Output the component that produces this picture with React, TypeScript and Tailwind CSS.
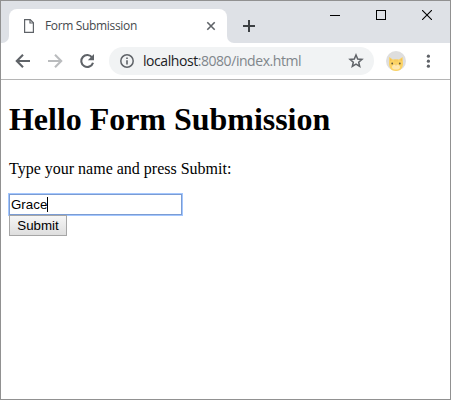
import React from 'react';

const uiFont = "font-['Segoe_UI','Open_Sans',sans-serif]";

function TabStrip() {
  return (
    <div className="flex h-[42px] shrink-0 flex-col bg-white">
      <div className="h-2 shrink-0 bg-[#dee1e6]" />
      <div className="flex h-[34px]">
        <div className="w-2 shrink-0 rounded-br-[7px] bg-[#dee1e6]" />
        <div className="w-[218px] shrink-0 bg-[linear-gradient(#dee1e6_50%,#fff_50%)]">
          <div className="flex h-[34px] items-center rounded-t-lg bg-white pr-[11px] pl-[14px]">
            <svg width="12" height="16" viewBox="0 0 12 16" fill="none" stroke="#5f6368" strokeWidth="1.2" className="shrink-0">
              <path d="M1.6 1.6H7.2L10.4 4.8V14.4H1.6Z" />
              <path d="M7 1.6V5H10.4" />
            </svg>
            <span className={`ml-[10px] flex-1 whitespace-nowrap text-[12px] leading-4 tracking-[-0.34px] text-[#45494d] ${uiFont}`}>
              Form Submission
            </span>
            <svg width="10" height="10" viewBox="0 0 10 10" stroke="#5f6368" strokeWidth="1.6" className="shrink-0">
              <path d="M1.3 1.3L8.7 8.7M8.7 1.3L1.3 8.7" />
            </svg>
          </div>
        </div>
        <div className="flex-1 rounded-bl-[7px] bg-[#dee1e6] pt-[11px] pl-4">
          <svg width="12" height="12" viewBox="0 0 12 12" stroke="#3c4043" strokeWidth="2">
            <path d="M6 0V12M0 6H12" />
          </svg>
        </div>
      </div>
    </div>
  );
}

function WindowControls() {
  return (
    <div className="absolute top-2 right-[18px] flex h-3 items-center gap-9">
      <svg width="10" height="10" viewBox="0 0 10 10" stroke="#000" shapeRendering="crispEdges">
        <path d="M0 5.5H10" />
      </svg>
      <svg width="10" height="10" viewBox="0 0 10 10" stroke="#000" fill="none" shapeRendering="crispEdges">
        <path d="M.5 .5H9.5V9.5H.5Z" />
      </svg>
      <svg width="10" height="10" viewBox="0 0 10 10" stroke="#000" strokeWidth="1.1">
        <path d="M0 0L10 10M10 0L0 10" />
      </svg>
    </div>
  );
}

function CatAvatar() {
  return (
    <svg width="20" height="20" viewBox="0 0 20 20" className="ml-3 shrink-0">
      <circle cx="10" cy="10" r="10" fill="#dedede" />
      <path d="M3.2 6L6.8 8.6Q10 7.8 13 8.6L16.6 6L17 13Q16.7 17.5 13.5 19.3Q10 20.6 6.3 19.2Q3.3 17.4 3 13Z" fill="#fcd364" />
      <path d="M4 7.2L6 9L4 10.4ZM16 7.2L14 9L16 10.4Z" fill="#f5c257" />
      <path d="M9 8.5V10.5M11 8.5V10.5" stroke="#efbd54" strokeWidth=".7" />
      <ellipse cx="10" cy="16" rx="4" ry="2.6" fill="#ffe7ac" />
      <circle cx="6.2" cy="12.5" r=".9" fill="#655a39" />
      <circle cx="13.8" cy="12.5" r=".9" fill="#655a39" />
      <path d="M9.2 13.7H10.8L10 14.6Z" fill="#d39a55" />
    </svg>
  );
}

function Toolbar() {
  return (
    <div className="flex h-9 shrink-0 items-center bg-white pl-[14px]">
      <svg width="16" height="16" viewBox="0 0 16 16" fill="none" stroke="#5f6368" strokeWidth="2.1" className="shrink-0">
        <path d="M15 8H2.5M8 1.8L1.8 8L8 14.2" />
      </svg>
      <svg width="16" height="16" viewBox="0 0 16 16" fill="none" stroke="#babcbe" strokeWidth="2.1" className="ml-4 shrink-0">
        <path d="M1 8H13.5M8 1.8L14.2 8L8 14.2" />
      </svg>
      <svg width="16" height="16" viewBox="0 0 16 16" fill="none" className="ml-4 shrink-0">
        <path d="M13.2 4.6A6 6 0 1 0 14 9.7" stroke="#5f6368" strokeWidth="2.1" />
        <path d="M15 1V7.2H8.8Z" fill="#5f6368" />
      </svg>
      <div className="ml-[14px] flex h-7 w-[265px] shrink-0 items-center rounded-full bg-[#f1f3f4] pr-[10px] pl-[11px]">
        <svg width="14" height="14" viewBox="0 0 14 14" fill="none" stroke="#5f6368" className="shrink-0">
          <circle cx="7" cy="7" r="6.2" strokeWidth="1.5" />
          <path d="M7 6.2V10.5M7 3.5V5" strokeWidth="1.6" />
        </svg>
        <span className={`ml-[9px] flex-1 whitespace-nowrap text-[14px] leading-5 tracking-[-0.44px] text-[#80868b] ${uiFont}`}>
          <span className="text-[#202124]">localhost</span>:8080/index.html
        </span>
        <svg width="16" height="16" viewBox="0 0 16 16" fill="none" stroke="#5f6368" strokeWidth="1.5" className="shrink-0">
          <path d="M8 2L9.7 6L14 6.4L10.7 9.2L11.7 13.5L8 11.2L4.3 13.5L5.3 9.2L2 6.4L6.3 6Z" />
        </svg>
      </div>
      <CatAvatar />
      <svg width="4" height="14" viewBox="0 0 4 14" fill="#5f6368" className="ml-5 shrink-0">
        <circle cx="2.4" cy="2.2" r="1.6" />
        <circle cx="2.4" cy="7.2" r="1.6" />
        <circle cx="2.4" cy="12.2" r="1.6" />
      </svg>
    </div>
  );
}

function Page() {
  return (
    <main className="flex flex-1 flex-col items-start border-t border-[#b5b5b5] bg-white pl-2 font-['Liberation_Serif',serif] text-black">
      <h1 className="mt-[21px] whitespace-nowrap text-[32px] leading-[37px] font-bold tracking-[-0.03px]">Hello Form Submission</h1>
      <p className="mt-[22px] whitespace-nowrap text-[16px] leading-[18px]">Type your name and press Submit:</p>
      <div className="mt-4 flex h-[21px] w-[173px] items-center border border-[#7b9cd3] pl-px font-['Liberation_Sans',sans-serif] text-[13.33px] leading-4 ring-1 ring-[#a3c7ff]">
        <span>Grace</span>
        <span className="h-[15px] w-px bg-black" />
      </div>
      <button className="flex h-[21px] w-[58px] items-center justify-center border border-[#a6a6a6] bg-linear-to-b from-[#f6f6f6] to-[#dedede] font-['Liberation_Sans',sans-serif] text-[13.33px] leading-4">
        Submit
      </button>
    </main>
  );
}

export default function App() {
  return (
    <div className="relative flex h-[400px] w-[451px] flex-col overflow-hidden border border-[#919191] bg-white">
      <TabStrip />
      <WindowControls />
      <Toolbar />
      <Page />
    </div>
  );
}
